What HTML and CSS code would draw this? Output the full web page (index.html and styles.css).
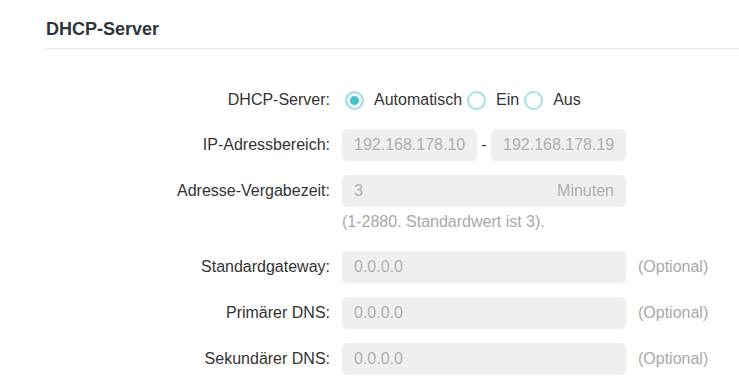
FILE: index.html
```html
<!DOCTYPE html>
<html lang="de">
<head>
  <meta charset="UTF-8" />
  <meta name="viewport" content="width=device-width, initial-scale=1.0"/>
  <title>DHCP-Server</title>
  <link rel="stylesheet" href="styles.css">
</head>
<body>
  <section class="panel">
    <h2 class="panel-title">DHCP-Server</h2>

    <form class="form">
      <div class="row">
        <span class="label">DHCP-Server:</span>
        <div class="radios">
          <label class="radio"><input type="radio" name="dhcp" checked><span>Automatisch</span></label>
          <label class="radio"><input type="radio" name="dhcp"><span>Ein</span></label>
          <label class="radio"><input type="radio" name="dhcp"><span>Aus</span></label>
        </div>
      </div>

      <div class="row field">
        <span class="label">IP-Adressbereich:</span>
        <div class="range">
          <input class="box short" type="text" value="192.168.178.100" disabled>
          <span class="dash">-</span>
          <input class="box short" type="text" value="192.168.178.199" disabled>
        </div>
      </div>

      <div class="row field">
        <span class="label">Adresse-Vergabezeit:</span>
        <div class="box unit-box">
          <input type="text" value="3" disabled>
          <span class="unit">Minuten</span>
        </div>
      </div>
      <div class="hint">(1-2880. Standardwert ist 3).</div>

      <div class="row field">
        <span class="label">Standardgateway:</span>
        <input class="box" type="text" value="0.0.0.0" disabled>
        <span class="note">(Optional)</span>
      </div>

      <div class="row field">
        <span class="label">Primärer DNS:</span>
        <input class="box" type="text" value="0.0.0.0" disabled>
        <span class="note">(Optional)</span>
      </div>

      <div class="row field">
        <span class="label">Sekundärer DNS:</span>
        <input class="box" type="text" value="0.0.0.0" disabled>
        <span class="note">(Optional)</span>
      </div>
    </form>
  </section>
</body>
</html>
```

FILE: styles.css
```css
body { margin: 0; font-family: 'Liberation Sans', Arial, sans-serif; background: #fff; color: #333; }
.panel { padding: 17px 0 0 46px; }
.panel-title { margin: 0; padding-bottom: 7px; font-size: 18px; line-height: 24px; font-weight: bold; color: #2e343b; border-bottom: 1px solid #e6e6e6; }

.form { margin-top: 36px; display: flex; flex-direction: column; gap: 14px; }
.row { display: flex; align-items: center; gap: 12px; height: 30px; font-size: 16px; }
.row.field { height: 32px; }
.label { width: 284px; text-align: right; color: #333; }

.radios { display: flex; align-items: center; gap: 5px; margin-left: 3px; }
.radio { display: flex; align-items: center; gap: 10px; color: #333; cursor: pointer; }
.radio input { appearance: none; -webkit-appearance: none; margin: 0; width: 19px; height: 19px; border: 2px solid #a3e2e9; border-radius: 50%; background: #fff; }
.radio input:checked { background: #3ec1cf; box-shadow: inset 0 0 0 3px #fff; }

.box { box-sizing: border-box; width: 284px; height: 32px; padding: 0 12px; border: none; border-radius: 5px; background: #efefef; color: #b0b0b0; font: 16px 'Liberation Sans', Arial, sans-serif; outline: none; }
.box.short { width: 135px; }
.range { display: flex; align-items: center; gap: 4px; }
.dash { width: 6px; text-align: center; color: #333; }
.unit-box { display: flex; align-items: center; }
.unit-box input { flex: 1; min-width: 0; border: none; background: transparent; padding: 0; color: #b0b0b0; font: inherit; }
.unit { color: #b0b0b0; }

.hint { margin: -8px 0 6px 296px; line-height: 18px; font-size: 16px; color: #a8a8a8; }
.note { color: #a8a8a8; }
```
